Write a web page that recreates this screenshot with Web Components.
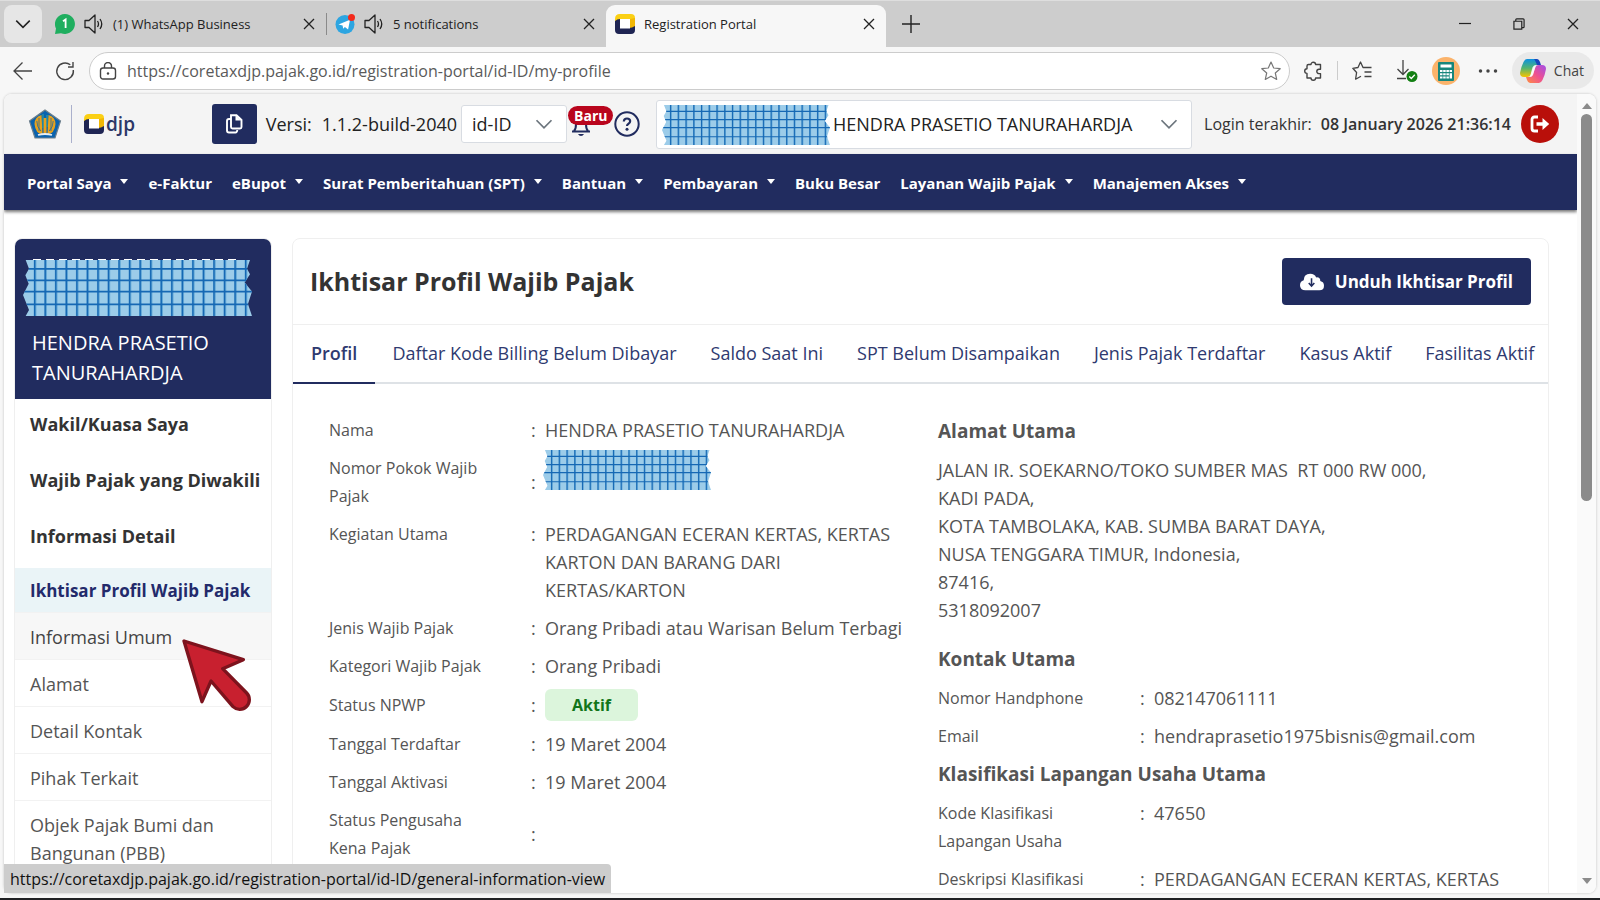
<!DOCTYPE html>
<html lang="id">
<head>
<meta charset="utf-8">
<meta name="viewport" content="width=device-width, initial-scale=1">
<title>Registration Portal</title>
<style>
    html, body{
        height: 100%;
        margin: 0;
    }
    body{
        font-family: "Open Sans", "Noto Sans", sans-serif;
        font-size: 18px;
        line-height: 28px;
        color: #555;
        --navy: #212c5f;
        --line: #efefef;
    }
</style>
</head>
<body>

<browser-window>
    <browser-tabs slot="tabs"></browser-tabs>
    <address-bar slot="toolbar"></address-bar>

    <portal-header></portal-header>
    <portal-nav></portal-nav>
    <portal-layout>
        <side-menu slot="side"></side-menu>
        <profile-card></profile-card>
    </portal-layout>

    <link-preview slot="status">https://coretaxdjp.pajak.go.id/registration-portal/id-ID/general-information-view</link-preview>
</browser-window>

<script>
// name: [viewBox, markup]
const ICONS = {
    chevron: ['0 0 16 16', '<path d="M2 5l6 6 6-6" fill="none" stroke="currentColor" stroke-width="1.4"/>'],
    whatsapp: ['0 0 20 20', '<path d="M10 0a10 10 0 1 1-4 19.200L0 20l1-5.500A10 10 0 0 1 10 0z" fill="#1fae5f"/><path d="M8 7.300L10.600 5.500V14" fill="none" stroke="#fff" stroke-width="1.800"/>'],
    sound: ['0 0 20 20', '<path d="M1 6.500h4L11 1v18l-6-5.500H1zM13.500 7q2 3 0 6M16 5q3.500 5 0 10" fill="none" stroke="currentColor" stroke-width="1.300" stroke-linejoin="round"/>'],
    telegram: ['0 0 20 20', '<circle cx="10" cy="10.500" r="9.500" fill="#2da5e1"/><path d="M3.500 10.500L15 5.800l-1.900 9.600-3.200-2.300-1.700 1.700-.6-3.200z" fill="#fff"/><circle cx="16.500" cy="3.500" r="3.500" fill="#f32a1c"/>'],
    djp: ['0 0 20 20', '<path d="M5 0h11q4 0 4 4v9q-2 2-5 1V5H7q-3 0-5 2L0 8V5q0-5 5-5z" fill="#fbd015"/><path d="M20 4v9q-2 2-5 1V5z" fill="#f2b705"/><path d="M0 7q2-2 5-2v9h9q3 0 6-2v4q0 4-4 4H4q-4 0-4-4z" fill="#1f2553"/><path d="M5 5h10v9.500H5z" fill="#fff"/>'],
    close: ['0 0 12 12', '<path d="M1 1l10 10M11 1L1 11" stroke="currentColor" stroke-width="1.300"/>'],
    plus: ['0 0 18 18', '<path d="M9 0v18M0 9h18" stroke="currentColor" stroke-width="1.400"/>'],
    minimise: ['0 0 12 12', '<path d="M0 5.500h12" stroke="currentColor" stroke-width="1.200"/>'],
    restore: ['0 0 13 13', '<path d="M1 3.500h8.500V12H1zM3 3.300V2q0-1 1-1h7q1 0 1 1v7.500q0 1-1 1h-1" fill="none" stroke="currentColor" stroke-width="1.300"/>'],
    back: ['0 0 20 20', '<path d="M19 10H1M9.500 1.500L1 10l8.500 8.500" fill="none" stroke="currentColor" stroke-width="1.300"/>'],
    reload: ['0 0 20 20', '<path d="M18.300 9a8.300 8.300 0 1 1-3-5.200M18 1v5H13" fill="none" stroke="currentColor" stroke-width="1.400"/>'],
    lock: ['0 0 18 18', '<rect x="1.500" y="6" width="15" height="11" rx="2.500" fill="none" stroke="currentColor" stroke-width="1.400"/><path d="M5.500 6V4a3.500 3.500 0 0 1 7 0v2" fill="none" stroke="currentColor" stroke-width="1.400"/><circle cx="9" cy="11.500" r="1.200" fill="currentColor"/>'],
    star: ['0 0 20 20', '<path d="M10 1l2.700 6 6.500.7-4.900 4.300 1.400 6.400L10 15.200l-5.700 3.200L5.700 12 .8 7.700 7.300 7z" fill="none" stroke="currentColor" stroke-width="1.200" stroke-linejoin="round"/>'],
    puzzle: ['0 0 20 20', '<path d="M5.500 3.500H8a2.300 2.300 0 0 1 4.600 0H17.500v4.700H16a2.200 2.200 0 0 0 0 4.400h1.500v4.400h-4.900a2.300 2.300 0 0 1-4.600 0H4v-4.600a2.300 2.300 0 0 1 0-4.600V5q0-1.500 1.500-1.500z" fill="none" stroke="currentColor" stroke-width="1.400" stroke-linejoin="round"/>'],
    favorites: ['0 0 20 20', '<path d="M13.500 6.500L11 6.500 8.500 1 6 6.500.8 7.300l3.800 4.200-1 6.700 5.400-3M12 6.500h7.500M12.500 11h7M12.500 15.500h7" fill="none" stroke="currentColor" stroke-width="1.300" stroke-linejoin="round"/>'],
    download: ['0 0 22 22', '<path d="M7 0v14M1.500 9L7 14.500 12.500 9M1 18.500h9" fill="none" stroke="currentColor" stroke-width="1.300"/><circle cx="16" cy="16.500" r="5.500" fill="#138013"/><path d="M13.300 16.500l2 2 3.500-3.700" fill="none" stroke="#fff" stroke-width="1.300"/>'],
    calc: ['0 0 28 28', '<circle cx="14" cy="14" r="14" fill="#fbb36b"/><rect x="6" y="5" width="16" height="19" rx="1" fill="#17867c"/><path d="M8.500 7.500h11v3h-11zM8 13h2.500v2H8zm3.200 0h2.500v2h-2.500zm3.200 0h2.500v2h-2.500zm3.200 0H20v2h-2.400zM8 16.200h2.500v2H8zm3.200 0h2.500v2h-2.500zm3.200 0h2.500v2h-2.500zM8 19.400h2.500v2H8zm3.200 0h2.500v2h-2.500zm3.200 0h2.500v2h-2.500zm3.200-3.200H20v5.200h-2.400z" fill="#fff"/>'],
    dots: ['0 0 16 16', '<circle cx="2" cy="8" r="1.400" fill="currentColor"/><circle cx="8" cy="8" r="1.400" fill="currentColor"/><circle cx="14" cy="8" r="1.400" fill="currentColor"/>'],
    copilot: ['0 0 26 24', `<defs>
        <linearGradient id="a" x1="0" y1="0" x2="0" y2="1"><stop offset="0" stop-color="#0d91e1"/><stop offset=".5" stop-color="#52b471"/><stop offset="1" stop-color="#f7c400"/></linearGradient>
        <linearGradient id="b" x1="1" y1="0" x2="0" y2="1"><stop offset="0" stop-color="#a04ee9"/><stop offset=".5" stop-color="#ee5091"/><stop offset="1" stop-color="#ff8f3f"/></linearGradient>
        </defs>
        <path d="M7 0h9q2 0 3 3l1 3h-3q-3 0-4 3l-2 6q-1 3-4 3H4q-4 0-4-4Q1 8 3.500 3 5 0 7 0z" fill="url(#a)"/>
        <path d="M14 0h3q2 0 3 3l1 3h-4q-2-5-3-6z" fill="#1746bd"/>
        <path d="M19 24h-9q-2 0-3-3l-1-3h3q3 0 4-3l2-6q1-3 4-3h3q4 0 4 4-1 6-3.500 11Q21 24 19 24z" fill="url(#b)"/>
        <path d="M12 10q1-4 4-4l-3 10q-1 2-3 2z" fill="#fff" opacity=".8"/>`],
    kemenkeu: ['0 0 34 30', '<path d="M17 1l15.500 11L27 29H7L1.500 12z" fill="#0b63ae" stroke="#6d7f8c" stroke-width="1.200"/><path d="M6.500 15q0-7 7-9l1 19q-7 0-8-10zM27.500 15q0-7-7-9l-1 19q7 0 8-10zM15.500 9h3v15h-3z" fill="#e6a11d"/><path d="M11 9v13M23 9v13M8.800 12q0 6 4 10M25.200 12q0 6-4 10" fill="none" stroke="#0b63ae" stroke-width=".7"/><path d="M15 5v14M19 6v12" stroke="#3aa69a" stroke-width="1"/><path d="M10 26q7-2 14 0" fill="none" stroke="#e8eef2" stroke-width="1.800"/>'],
    copy: ['0 0 18 20', '<path d="M6 1.200h5.500L16.500 6v7q0 1.500-1.500 1.500H7.500Q6 14.500 6 13zM5.500 5H4Q2 5 2 7v9.500q0 2 2 2h6.500q1.500 0 1.800-2.500" fill="none" stroke="#fff" stroke-width="1.900"/><path d="M10.500 1v5.500H16z" fill="#fff"/>'],
    bell: ['0 0 20 20', '<path d="M1 15.500h18M3 15q2-2 2-7 0-6 5-6t5 6q0 5 2 7" fill="none" stroke="#212c5f" stroke-width="2"/><path d="M7 18h6q-1 2-3 2t-3-2z" fill="#212c5f"/>'],
    help: ['0 0 26 26', '<circle cx="13" cy="13" r="11.700" fill="none" stroke="#212c5f" stroke-width="2"/><path d="M9.800 10.500Q10 7.500 13 7.500t3.200 2.600q0 1.700-1.700 2.600-1.500.8-1.500 2.400" fill="none" stroke="#212c5f" stroke-width="2.200"/><circle cx="13" cy="18.200" r="1.500" fill="#212c5f"/>'],
    logout: ['0 0 20 18', '<path d="M8 2H4.500Q2 2 2 4.500v9Q2 16 4.500 16H8" fill="none" stroke="#fff" stroke-width="2.800"/><path d="M6.500 7.300h6V3l6.700 6-6.700 6v-4.300h-6z" fill="#fff"/>'],
    cloud: ['0 0 26 18', '<path d="M6 18Q0 18 0 12.500 0 8.500 4 7.200 4 0 11 0q5 0 6.500 4 4.500-.5 4.500 4 4 1 4 5 0 5-5 5z" fill="#fff"/><path d="M12.500 5v8M9.500 10l3 3.500 3-3.500" fill="none" stroke="#212c5f" stroke-width="1.700"/>']
};

class UiIcon extends HTMLElement{

    connectedCallback(){
        if(!this.shadowRoot) this.attachShadow({mode: 'open'});
        const [box, markup] = ICONS[this.getAttribute('name')];
        this.shadowRoot.innerHTML = `
        <style>
        :host{
            display: inline-block;
            flex: none;
            width: 20px;
            height: 20px;
        }
        svg{
            display: block;
            width: 100%;
            height: 100%;
        }
        </style>
        <svg viewBox="${box}" aria-hidden="true">${markup}</svg>
        `;
    }
}

// a strip of checked masking tape, stretched over whatever it hides
class MaskTape extends HTMLElement{

    constructor(){
        super();
        this.attachShadow({mode: 'open'});
    }

    connectedCallback(){
        let lines = '';
        for(let i = 0; i < 21; i++){
            const x = 36 + i * 31.6;
            lines += `<path d="M${x} 0V165" stroke="#5fa5d5" stroke-width="8"/><path d="M${x - 1} 0V165" stroke="#1668b4" stroke-width="4"/>`;
        }
        for(const y of [26, 60, 93, 131]){
            lines += `<path d="M0 ${y}H686" stroke="#1668b4" stroke-width="5"/>`;
        }
        this.shadowRoot.innerHTML = `
        <style>
        :host{
            display: block;
        }
        svg{
            display: block;
            width: 100%;
            height: 100%;
        }
        </style>
        <svg viewBox="0 0 686 165" preserveAspectRatio="none" aria-hidden="true">
            <clipPath id="torn"><path d="M8 0H680L671 26 680 42 664 66 686 93 674 130 686 165H8L18 147 0 103 17 70 7 45 18 26z"/></clipPath>
            <g clip-path="url(#torn)"><rect width="686" height="165" fill="#9ccce9"/>${lines}</g>
        </svg>
        `;
    }
}

class BrowserWindow extends HTMLElement{

    constructor(){
        super();
        this.attachShadow({mode: 'open'});
    }

    connectedCallback(){
        this.shadowRoot.innerHTML = `
        <style>
        :host{
            display: flex;
            flex-direction: column;
            box-sizing: border-box;
            height: 100vh;
            background: #f7f7f7;
            border-bottom: 2px solid #202124;
            overflow: hidden;
            position: relative;
        }
        .viewport{
            flex: 1;
            min-height: 0;
            display: flex;
            margin: 0 4px 5px;
            border-radius: 8px;
            background: #fff;
            box-shadow: 0 0 2px 1px #ddd;
            overflow: hidden;
        }
        .page{
            flex: 1;
            min-width: 0;
            overflow: hidden;
        }
        .scrollbar{
            display: flex;
            flex-direction: column;
            align-items: center;
            gap: 5px;
            width: 19px;
            padding: 9px 0;
            box-sizing: border-box;
            background: #fafafa;
        }
        .scrollbar i{
            border: 5px solid transparent;
            border-top: 0;
            border-bottom: 6px solid #8b8b8b;
        }
        .scrollbar i:last-child{
            border-bottom: 0;
            border-top: 6px solid #8b8b8b;
        }
        .track{
            flex: 1;
        }
        .thumb{
            width: 11px;
            height: 51%;
            border-radius: 6px;
            background: #8b8b8b;
        }
        .status{
            position: absolute;
            left: 4px;
            bottom: 5px;
        }
        </style>
        <slot name="tabs"></slot>
        <slot name="toolbar"></slot>
        <div class="viewport">
            <div class="page"><slot></slot></div>
            <div class="scrollbar"><i></i><div class="track"><div class="thumb"></div></div><i></i></div>
        </div>
        <div class="status"><slot name="status"></slot></div>
        `;
    }
}

class BrowserTabs extends HTMLElement{

    constructor(){
        super();
        this.attachShadow({mode: 'open'});
    }

    connectedCallback(){
        this.shadowRoot.innerHTML = `
        <style>
        :host{
            display: flex;
            align-items: flex-end;
            height: 47px;
            box-sizing: border-box;
            border-top: 1px solid #dedede;
            background: #cdcdcd;
            color: #222;
            font-size: 13px;
            line-height: 20px;
        }
        button{
            display: grid;
            place-items: center;
            padding: 0;
            border: 0;
            background: none;
            color: inherit;
        }
        button ui-icon{
            width: 12px;
            height: 12px;
        }
        .list{
            width: 38px;
            height: 38px;
            margin: 0 4px 4px;
            border-radius: 8px;
            background: #e6e6e6;
        }
        .list ui-icon{
            width: 18px;
            height: 18px;
        }
        .tab{
            display: flex;
            align-items: center;
            gap: 9px;
            width: 280px;
            height: 42px;
            padding: 0 11px 4px 9px;
            box-sizing: border-box;
        }
        .tab span{
            flex: 1;
            white-space: nowrap;
        }
        .tab.ruled{
            position: relative;
        }
        .tab.ruled::before{
            content: "";
            position: absolute;
            left: 0;
            top: 8px;
            width: 1px;
            height: 22px;
            background: #8a8a8a;
        }
        .tab.active{
            background: #f7f7f7;
            border-radius: 9px 9px 0 0;
        }
        .tab button{
            width: 12px;
            height: 20px;
        }
        .add, .window button{
            width: 50px;
            height: 46px;
        }
        .add ui-icon{
            width: 18px;
            height: 18px;
        }
        .window{
            display: flex;
            margin-left: auto;
        }
        .window button{
            width: 54px;
        }
        </style>
        <button class="list" aria-label="Tab actions"><ui-icon name="chevron"></ui-icon></button>
        <div class="tab"><ui-icon name="whatsapp"></ui-icon><ui-icon name="sound"></ui-icon><span>(1) WhatsApp Business</span><button aria-label="Close"><ui-icon name="close"></ui-icon></button></div>
        <div class="tab ruled"><ui-icon name="telegram"></ui-icon><ui-icon name="sound"></ui-icon><span>5 notifications</span><button aria-label="Close"><ui-icon name="close"></ui-icon></button></div>
        <div class="tab active"><ui-icon name="djp"></ui-icon><span>Registration Portal</span><button aria-label="Close"><ui-icon name="close"></ui-icon></button></div>
        <button class="add" aria-label="New tab"><ui-icon name="plus"></ui-icon></button>
        <div class="window">
            <button aria-label="Minimize"><ui-icon name="minimise"></ui-icon></button>
            <button aria-label="Restore"><ui-icon name="restore"></ui-icon></button>
            <button aria-label="Close window"><ui-icon name="close"></ui-icon></button>
        </div>
        `;
    }
}

class AddressBar extends HTMLElement{

    constructor(){
        super();
        this.attachShadow({mode: 'open'});
    }

    connectedCallback(){
        this.shadowRoot.innerHTML = `
        <style>
        :host{
            display: flex;
            align-items: center;
            height: 47px;
            padding: 0 6px 0 13px;
            box-sizing: border-box;
            color: #444;
            font-size: 16px;
        }
        button{
            display: flex;
            align-items: center;
            padding: 0;
            border: 0;
            background: none;
            color: inherit;
            font: inherit;
        }
        .reload{
            margin: 0 14px 0 22px;
        }
        .url{
            flex: 1;
            display: flex;
            align-items: center;
            gap: 10px;
            height: 38px;
            padding: 0 8px 0 9px;
            box-sizing: border-box;
            border: 1px solid #ccc;
            border-radius: 19px;
            background: #fff;
        }
        .url ui-icon{
            width: 18px;
            height: 18px;
        }
        .url button ui-icon{
            width: 20px;
            height: 20px;
            color: #777;
        }
        input{
            flex: 1;
            min-width: 0;
            padding: 0;
            border: 0;
            outline: 0;
            background: none;
            color: #5a5a5a;
            font: inherit;
        }
        .tools{
            display: flex;
            align-items: center;
            gap: 14px;
            margin-left: 13px;
        }
        .tools i{
            width: 1px;
            height: 19px;
            background: #ccc;
        }
        .tools .gap{
            margin-left: 10px;
        }
        .download ui-icon{
            width: 22px;
            height: 22px;
        }
        .calc ui-icon{
            width: 28px;
            height: 28px;
        }
        .more{
            margin-left: 4px;
        }
        .chat{
            gap: 8px;
            height: 37px;
            padding: 0 10px 0 8px;
            border-radius: 19px;
            background: #e9e9e9;
            font-size: 14px;
        }
        .chat ui-icon{
            width: 26px;
            height: 24px;
        }
        </style>
        <button aria-label="Back"><ui-icon name="back"></ui-icon></button>
        <button class="reload" aria-label="Refresh"><ui-icon name="reload"></ui-icon></button>
        <div class="url">
            <ui-icon name="lock"></ui-icon>
            <input aria-label="Address" value="https://coretaxdjp.pajak.go.id/registration-portal/id-ID/my-profile">
            <button aria-label="Add to favorites"><ui-icon name="star"></ui-icon></button>
        </div>
        <div class="tools">
            <button aria-label="Extensions"><ui-icon name="puzzle"></ui-icon></button>
            <i></i>
            <button aria-label="Favorites"><ui-icon name="favorites"></ui-icon></button>
            <button class="download gap" aria-label="Downloads"><ui-icon name="download"></ui-icon></button>
            <button class="calc" aria-label="Profile"><ui-icon name="calc"></ui-icon></button>
            <button class="more" aria-label="Settings"><ui-icon name="dots"></ui-icon></button>
            <button class="chat"><ui-icon name="copilot"></ui-icon>Chat</button>
        </div>
        `;
    }
}

class PortalHeader extends HTMLElement{

    constructor(){
        super();
        this.attachShadow({mode: 'open'});
    }

    connectedCallback(){
        this.shadowRoot.innerHTML = `
        <style>
        :host{
            display: flex;
            align-items: center;
            height: 60px;
            padding: 0 18px 0 24px;
            box-sizing: border-box;
            background: #f4f4f4;
            color: #222;
            white-space: nowrap;
        }
        button{
            display: grid;
            place-items: center;
            padding: 0;
            border: 0;
            background: none;
            color: inherit;
        }
        .seal{
            width: 34px;
            height: 30px;
        }
        .brand{
            display: flex;
            align-items: center;
            gap: 2px;
            height: 38px;
            margin-left: 9px;
            padding-left: 12px;
            box-sizing: border-box;
            border-left: 1px solid #aab0cc;
            color: #2b3768;
            font: 600 19px/24px "Open Sans", sans-serif;
        }
        .copy{
            width: 45px;
            height: 40px;
            margin-left: auto;
            border-radius: 3px;
            background: var(--navy);
        }
        .copy ui-icon{
            width: 18px;
        }
        .version{
            display: flex;
            gap: 10px;
            margin: 0 4px 0 9px;
        }
        .pick{
            display: flex;
            align-items: center;
            position: relative;
            height: 38px;
            box-sizing: border-box;
            border: 1px solid #d8dce2;
            border-radius: 3px;
            background: #fff;
        }
        .pick select{
            width: 100%;
            height: 100%;
            padding: 0 10px;
            border: 0;
            outline: 0;
            appearance: none;
            background: none;
            color: #222;
            font: inherit;
        }
        .pick ui-icon{
            position: absolute;
            right: 12px;
            width: 20px;
            color: #6c757d;
            pointer-events: none;
        }
        .lang{
            width: 106px;
        }
        .user{
            flex: 0 1 536px;
            height: 49px;
            margin: 0 12px 0 16px;
        }
        .user select{
            padding-left: 176px;
        }
        .user mask-tape{
            position: absolute;
            left: 5px;
            top: 4px;
            width: 168px;
            height: 40px;
        }
        .bell{
            position: relative;
            margin: 4px 23px 0 4px;
        }
        .bell b{
            position: absolute;
            left: -3px;
            top: -10px;
            padding: 0 6px;
            border-radius: 10px;
            background: #b9051d;
            color: #fff;
            font: 700 14px/19px "Open Sans", sans-serif;
        }
        .help ui-icon{
            width: 26px;
            height: 26px;
        }
        .login{
            display: flex;
            gap: 9px;
            color: #333;
            font-size: 16px;
        }
        .login b{
            font-weight: 600;
        }
        .out{
            width: 38px;
            height: 38px;
            margin-left: 10px;
            border-radius: 50%;
            background: #b90f0a;
        }
        .out ui-icon{
            height: 18px;
        }
        </style>
        <ui-icon class="seal" name="kemenkeu"></ui-icon>
        <div class="brand"><ui-icon name="djp"></ui-icon>djp</div>
        <button class="copy" aria-label="Salin versi"><ui-icon name="copy"></ui-icon></button>
        <div class="version"><span>Versi:</span><span>1.1.2-build-2040</span></div>
        <div class="pick lang"><select aria-label="Bahasa"><option>id-ID</option></select><ui-icon name="chevron"></ui-icon></div>
        <button class="bell" aria-label="Notifikasi"><ui-icon name="bell"></ui-icon><b>Baru</b></button>
        <button class="help" aria-label="Bantuan"><ui-icon name="help"></ui-icon></button>
        <div class="pick user"><select aria-label="Wajib pajak"><option>HENDRA PRASETIO TANURAHARDJA</option></select><mask-tape></mask-tape><ui-icon name="chevron"></ui-icon></div>
        <div class="login"><span>Login terakhir:</span><b>08 January 2026 21:36:14</b></div>
        <button class="out" aria-label="Keluar"><ui-icon name="logout"></ui-icon></button>
        `;
    }
}

class PortalNav extends HTMLElement{

    constructor(){
        super();
        this.attachShadow({mode: 'open'});
        this.items = [
            ['Portal Saya', true], ['e-Faktur'], ['eBupot', true], ['Surat Pemberitahuan (SPT)', true],
            ['Bantuan', true], ['Pembayaran', true], ['Buku Besar'], ['Layanan Wajib Pajak', true], ['Manajemen Akses', true]
        ];
    }

    connectedCallback(){
        this.shadowRoot.innerHTML = `
        <style>
        :host{
            display: block;
            position: relative;
            background: var(--navy);
            box-shadow: 0 2px 3px #777;
        }
        nav{
            display: flex;
            align-items: center;
            gap: 20px;
            height: 56px;
            padding: 2px 23px 0;
            box-sizing: border-box;
        }
        a{
            display: flex;
            align-items: center;
            gap: 9px;
            color: #fff;
            font-size: 15px;
            font-weight: 700;
            text-decoration: none;
            white-space: nowrap;
        }
        a.more::after{
            content: "";
            border: 4px solid transparent;
            border-top: 5px solid #fff;
            border-bottom: 0;
            margin-bottom: 4px;
        }
        </style>
        <nav>${this.items.map(([text, more]) => `<a href="#" class="${more ? 'more' : ''}">${text}</a>`).join('')}</nav>
        `;
    }
}

class PortalLayout extends HTMLElement{

    constructor(){
        super();
        this.attachShadow({mode: 'open'});
        this.shadowRoot.innerHTML = `
        <style>
        :host{
            display: grid;
            grid-template-columns: 258px minmax(0, 1fr);
            gap: 20px;
            align-items: start;
            padding: 28px 28px 0 10px;
        }
        </style>
        <slot name="side"></slot>
        <slot></slot>
        `;
    }
}

class SideMenu extends HTMLElement{

    constructor(){
        super();
        this.attachShadow({mode: 'open'});
        this.heads = ['Wakil/Kuasa Saya', 'Wajib Pajak yang Diwakili', 'Informasi Detail'];
        this.links = ['Ikhtisar Profil Wajib Pajak', 'Informasi Umum', 'Alamat', 'Detail Kontak', 'Pihak Terkait', 'Objek Pajak Bumi dan Bangunan (PBB)'];
    }

    connectedCallback(){
        this.shadowRoot.innerHTML = `
        <style>
        :host{
            display: block;
            position: relative;
            border: 1px solid var(--line);
            border-radius: 8px;
            box-sizing: border-box;
        }
        .owner{
            height: 160px;
            padding: 89px 17px 11px;
            box-sizing: border-box;
            border-radius: 7px 7px 0 0;
            background: var(--navy);
            color: #fff;
            font-size: 20px;
            line-height: 30px;
            position: relative;
        }
        .owner::before{
            content: "";
            position: absolute;
            left: 18px;
            top: 20px;
            width: 206px;
            height: 2px;
            background: repeating-linear-gradient(90deg, #fff 0 8px, transparent 8px 13px);
        }
        mask-tape{
            position: absolute;
            left: 8px;
            top: 21px;
            width: 229px;
            height: 56px;
        }
        a{
            display: block;
            padding: 10px 8px 8px 15px;
            border-bottom: 1px solid #f2f2f2;
            color: #555;
            text-decoration: none;
        }
        a.head{
            padding: 11px 8px 17px 15px;
            border: 0;
            color: #333;
            font-weight: 700;
        }
        a.current{
            margin-top: 1px;
            padding: 9px 8px 7px 15px;
            background: #eaf4f7;
            color: #232a6b;
            font-size: 17px;
            font-weight: 700;
        }
        a.hover{
            background: #f7f7f7;
            color: #444;
        }
        .pointer{
            position: absolute;
            left: 167px;
            top: 400px;
            width: 70px;
            height: 72px;
        }
        </style>
        <div class="owner">HENDRA PRASETIO TANURAHARDJA<mask-tape></mask-tape></div>
        ${this.heads.map(t => `<a class="head" href="#">${t}</a>`).join('')}
        ${this.links.map((t, i) => `<a class="${['current', 'hover'][i] || ''}" href="#">${t}</a>`).join('')}
        <svg class="pointer" viewBox="0 0 210 216" aria-hidden="true">
            <path d="M6 6L184 62 122 89 194 162A29 29 0 0 1 153 203L87 126 60 188z" fill="#c8202f" stroke="#7d131d" stroke-width="10" stroke-linejoin="round"/>
        </svg>
        `;
    }
}

// <detail-row label="..." middle>value</detail-row>
class DetailRow extends HTMLElement{

    constructor(){
        super();
        this.attachShadow({mode: 'open'});
    }

    connectedCallback(){
        this.shadowRoot.innerHTML = `
        <style>
        :host{
            display: grid;
            grid-template-columns: 202px 14px minmax(0, 1fr);
            align-items: start;
            margin-bottom: 10px;
        }
        :host([middle]){
            align-items: center;
        }
        .label{
            max-width: 160px;
            font-size: 16px;
        }
        </style>
        <span class="label">${this.getAttribute('label')}</span><span>:</span><slot></slot>
        `;
    }
}

class ProfileCard extends HTMLElement{

    constructor(){
        super();
        this.attachShadow({mode: 'open'});
        this.tabs = ['Profil', 'Daftar Kode Billing Belum Dibayar', 'Saldo Saat Ini', 'SPT Belum Disampaikan', 'Jenis Pajak Terdaftar', 'Kasus Aktif', 'Fasilitas Aktif'];
    }

    connectedCallback(){
        this.shadowRoot.innerHTML = `
        <style>
        :host{
            display: block;
            border: 1px solid var(--line);
            border-radius: 8px;
            box-sizing: border-box;
        }
        header{
            display: flex;
            align-items: center;
            justify-content: space-between;
            height: 86px;
            padding: 0 17px;
            box-sizing: border-box;
            border-bottom: 1px solid var(--line);
        }
        h1, h2{
            margin: 0;
            font-weight: 700;
        }
        h1{
            padding-bottom: 2px;
            color: #333;
            font-size: 25px;
        }
        header button{
            display: flex;
            align-items: center;
            gap: 11px;
            height: 47px;
            padding: 0 18px;
            border: 0;
            border-radius: 4px;
            background: var(--navy);
            color: #fff;
            font: 700 17px/28px "Open Sans", sans-serif;
        }
        header ui-icon{
            width: 24px;
            height: 18px;
        }
        [role=tablist]{
            display: flex;
            box-shadow: inset 0 -2px #dee2e6;
            overflow: hidden;
        }
        [role=tab]{
            flex: none;
            height: 59px;
            padding: 0 17px 3px;
            border: 0;
            background: none;
            color: #2f3a70;
            font: inherit;
            white-space: nowrap;
        }
        [aria-selected=true]{
            padding: 0 18px 3px;
            font-weight: 600;
            box-shadow: inset 0 -2px var(--navy);
        }
        .body{
            display: grid;
            grid-template-columns: 609px minmax(0, 1fr);
            padding: 32px 16px 0 36px;
        }
        .left{
            padding-right: 24px;
        }
        .right{
            padding-top: 1px;
        }
        h2{
            margin-bottom: 11px;
            font-size: 19px;
        }
        address{
            margin-bottom: 21px;
            font-style: normal;
            white-space: pre-line;
        }
        .badge{
            justify-self: start;
            margin: -1px 0;
            padding: 2px 27px;
            border-radius: 6px;
            background: #dcf5dc;
            color: #12751a;
            font-size: 16px;
            font-weight: 700;
        }
        mask-tape{
            width: 168px;
            height: 40px;
            margin: -24px 0 0 -2px;
        }
        </style>
        <header>
            <h1>Ikhtisar Profil Wajib Pajak</h1>
            <button><ui-icon name="cloud"></ui-icon>Unduh Ikhtisar Profil</button>
        </header>
        <div role="tablist">${this.tabs.map((t, i) => `<button role="tab" aria-selected="${i === 0}">${t}</button>`).join('')}</div>
        <div class="body">
            <div class="left">
                <detail-row label="Nama">HENDRA PRASETIO TANURAHARDJA</detail-row>
                <detail-row label="Nomor Pokok Wajib Pajak" middle><mask-tape></mask-tape></detail-row>
                <detail-row label="Kegiatan Utama">PERDAGANGAN ECERAN KERTAS, KERTAS KARTON DAN BARANG DARI KERTAS/KARTON</detail-row>
                <detail-row label="Jenis Wajib Pajak">Orang Pribadi atau Warisan Belum Terbagi</detail-row>
                <detail-row label="Kategori Wajib Pajak">Orang Pribadi</detail-row>
                <detail-row label="Status NPWP" middle><span class="badge">Aktif</span></detail-row>
                <detail-row label="Tanggal Terdaftar">19 Maret 2004</detail-row>
                <detail-row label="Tanggal Aktivasi">19 Maret 2004</detail-row>
                <detail-row label="Status Pengusaha Kena Pajak" middle></detail-row>
            </div>
            <div class="right">
                <h2>Alamat Utama</h2>
                <address>JALAN IR. SOEKARNO/TOKO SUMBER MAS&nbsp; RT 000 RW 000,
                    KADI PADA,
                    KOTA TAMBOLAKA, KAB. SUMBA BARAT DAYA,
                    NUSA TENGGARA TIMUR, Indonesia,
                    87416,
                    5318092007</address>
                <h2>Kontak Utama</h2>
                <detail-row label="Nomor Handphone">082147061111</detail-row>
                <detail-row label="Email">hendraprasetio1975bisnis@gmail.com</detail-row>
                <h2>Klasifikasi Lapangan Usaha Utama</h2>
                <detail-row label="Kode Klasifikasi Lapangan Usaha">47650</detail-row>
                <detail-row label="Deskripsi Klasifikasi">PERDAGANGAN ECERAN KERTAS, KERTAS</detail-row>
            </div>
        </div>
        `;
    }
}

class LinkPreview extends HTMLElement{

    constructor(){
        super();
        this.attachShadow({mode: 'open'});
        this.shadowRoot.innerHTML = `
        <style>
        :host{
            display: block;
            padding: 1px 6px 0;
            border-radius: 0 4px 0 0;
            background: #cdcdcd;
            color: #111;
            font-size: 16px;
            line-height: 28px;
            white-space: nowrap;
        }
        </style>
        <slot></slot>
        `;
    }
}

customElements.define('ui-icon', UiIcon);
customElements.define('mask-tape', MaskTape);
customElements.define('browser-window', BrowserWindow);
customElements.define('browser-tabs', BrowserTabs);
customElements.define('address-bar', AddressBar);
customElements.define('portal-header', PortalHeader);
customElements.define('portal-nav', PortalNav);
customElements.define('portal-layout', PortalLayout);
customElements.define('side-menu', SideMenu);
customElements.define('detail-row', DetailRow);
customElements.define('profile-card', ProfileCard);
customElements.define('link-preview', LinkPreview);
</script>
</body>
</html>
